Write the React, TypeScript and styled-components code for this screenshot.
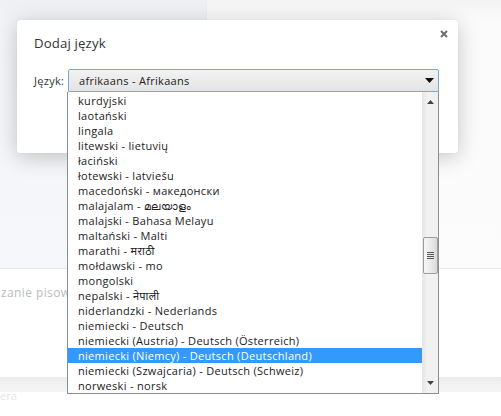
import React from "react";
import styled, { createGlobalStyle } from "styled-components";

const Global = createGlobalStyle`
  html, body { margin: 0; padding: 0; background: #fff; }
  body { font-family: "Open Sans", "Noto Sans", "DejaVu Sans", sans-serif; }
  * { box-sizing: border-box; }
`;

const Page = styled.div`
  position: relative;
  width: 501px;
  height: 416px;
  overflow: hidden;
  background: #fff;
`;

const TopArea = styled.div`
  display: grid;
  grid-template-columns: 207px 1fr;
  height: 269px;
  border-bottom: 1px solid #e8e9ec;
`;

const SidePanel = styled.div`
  background: linear-gradient(to bottom, #eef0f4 0px, #f4f5f8 40px, #f6f7fa 100%);
  border-right: 1px solid #eceef2;
`;

const MainPanel = styled.div`
  background: linear-gradient(to bottom, #f3f3f3 0px, #fbfbfb 20px, #fcfcfc 100%);
`;

const Section = styled.div`
  height: 108px;
  padding: 16px 0 0 1px;
`;

const FadedText = styled.div`
  font-size: 12px;
  color: #b9bcc2;
  white-space: nowrap;
  letter-spacing: 0.4px;
  line-height: 16px;
`;

const FooterBand = styled.div`
  height: 15px;
  background: linear-gradient(to bottom, #ececec, #f6f6f6);
`;

const FooterText = styled.div`
  font-size: 11px;
  color: #e4e5e8;
  line-height: 12px;
  margin-top: -2px;
`;

const Dialog = styled.div`
  position: absolute;
  left: 17px;
  top: 20px;
  width: 441px;
  height: 133px;
  background: #fff;
  border-radius: 3px;
  box-shadow: 0 4px 22px rgba(0, 0, 0, 0.22), 0 0 1px rgba(0, 0, 0, 0.12);
  padding: 14px 17px 0 17px;
`;

const TitleRow = styled.div`
  display: flex;
  justify-content: space-between;
  align-items: flex-start;
  height: 35px;
`;

const Title = styled.h1`
  margin: 0;
  font-size: 13.2px;
  font-weight: 400;
  letter-spacing: 0.15px;
  color: #333;
  line-height: 18px;
`;

const CloseButton = styled.button`
  border: 0;
  background: none;
  padding: 0;
  margin: -8px -11px 0 0;
  width: 16px;
  height: 16px;
  display: flex;
  align-items: center;
  justify-content: center;
`;

const FieldRow = styled.div`
  display: flex;
  align-items: center;
  gap: 4px;
`;

const Label = styled.label`
  font-size: 11px;
  letter-spacing: 0.3px;
  color: #333;
  width: 30px;
  white-space: nowrap;
`;

const Select = styled.div`
  flex: 1;
  height: 23px;
  margin-right: 2px;
  border: 1px solid #7aa9d8;
  border-radius: 2px 2px 0 0;
  background: linear-gradient(to bottom, #f2f2f2, #e4e4e4);
  display: flex;
  align-items: center;
  justify-content: space-between;
  padding: 0 4px 0 10px;
  font-size: 11px;
  letter-spacing: 0.3px;
  color: #222;
`;

const List = styled.ul`
  position: absolute;
  left: 67px;
  top: 92px;
  width: 372px;
  height: 302px;
  margin: 0;
  padding: 0;
  list-style: none;
  background: #fff;
  border: 1px solid #8a8f96;
  border-top: 0;
  display: grid;
  grid-template-columns: 1fr 16px;
`;

const Items = styled.div`
  padding-top: 1px;
`;

const Item = styled.li<{ $selected?: boolean }>`
  height: 15px;
  line-height: 15px;
  padding-left: 10px;
  font-size: 11px;
  letter-spacing: 0.3px;
  white-space: nowrap;
  color: ${(p) => (p.$selected ? "#fff" : "#222")};
  background: ${(p) => (p.$selected ? "#3399ff" : "transparent")};
`;

const Scrollbar = styled.div`
  position: relative;
  display: flex;
  flex-direction: column;
  justify-content: space-between;
  align-items: center;
  background: linear-gradient(to right, #e8e8e8, #f2f2f2 30%, #f0f0f0);
  border-left: 1px solid #e6e6e6;
  padding: 8px 0 8px;
`;

const Thumb = styled.div`
  position: absolute;
  left: 0px;
  top: 145px;
  width: 15px;
  height: 37px;
  border: 1px solid #9c9c9c;
  border-radius: 2px;
  background: linear-gradient(to right, #f6f6f6, #e8e8e8 60%, #d9d9d9);
  display: flex;
  align-items: center;
  justify-content: center;
`;

const items = [
  "kurdyjski",
  "laotański",
  "lingala",
  "litewski - lietuvių",
  "łaciński",
  "łotewski - latviešu",
  "macedoński - македонски",
  "malajalam - മലയാളം",
  "malajski - Bahasa Melayu",
  "maltański - Malti",
  "marathi - मराठी",
  "mołdawski - mo",
  "mongolski",
  "nepalski - नेपाली",
  "niderlandzki - Nederlands",
  "niemiecki - Deutsch",
  "niemiecki (Austria) - Deutsch (Österreich)",
  "niemiecki (Niemcy) - Deutsch (Deutschland)",
  "niemiecki (Szwajcaria) - Deutsch (Schweiz)",
  "norweski - norsk",
];

export default function App() {
  return (
    <>
      <Global />
      <Page>
        <TopArea>
          <SidePanel />
          <MainPanel />
        </TopArea>
        <Section>
          <FadedText>zanie pisowni</FadedText>
        </Section>
        <FooterBand />
        <FooterText>era</FooterText>

        <Dialog>
          <TitleRow>
            <Title>Dodaj język</Title>
            <CloseButton aria-label="Zamknij">
              <svg width="8" height="8" viewBox="0 0 8 8">
                <path d="M1 1 L7 7 M7 1 L1 7" stroke="#6e6e6e" strokeWidth="2" />
              </svg>
            </CloseButton>
          </TitleRow>
          <FieldRow>
            <Label>Język:</Label>
            <Select>
              <span>afrikaans - Afrikaans</span>
              <svg width="9" height="5" viewBox="0 0 9 5">
                <path d="M0 0 H9 L4.5 5 Z" fill="#111" />
              </svg>
            </Select>
          </FieldRow>
        </Dialog>

        <List>
          <Items>
            {items.map((t) => (
              <Item key={t} $selected={t.startsWith("niemiecki (Niemcy)")}>
                {t}
              </Item>
            ))}
          </Items>
          <Scrollbar>
            <svg width="7" height="4" viewBox="0 0 7 4">
              <path d="M0 4 L3.5 0 L7 4 Z" fill="#444" />
            </svg>
            <Thumb>
              <svg width="7" height="8" viewBox="0 0 7 8">
                <path d="M0 0.5 H7 M0 2.5 H7 M0 4.5 H7 M0 6.5 H7" stroke="#555" strokeWidth="1" />
              </svg>
            </Thumb>
            <svg width="7" height="4" viewBox="0 0 7 4">
              <path d="M0 0 H7 L3.5 4 Z" fill="#444" />
            </svg>
          </Scrollbar>
        </List>
      </Page>
    </>
  );
}
